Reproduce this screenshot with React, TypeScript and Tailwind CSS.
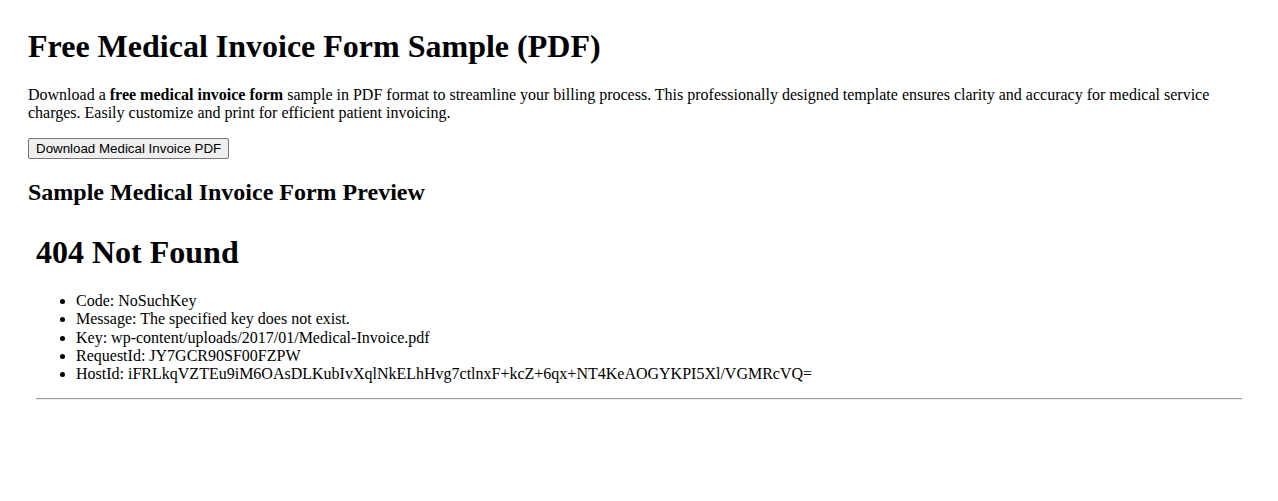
import React from 'react';

const details: { label: string; value: string }[] = [
    { label: 'Code', value: 'NoSuchKey' },
    { label: 'Message', value: 'The specified key does not exist.' },
    { label: 'Key', value: 'wp-content/uploads/2017/01/Medical-Invoice.pdf' },
    { label: 'RequestId', value: 'JY7GCR90SF00FZPW' },
    { label: 'HostId', value: 'iFRLkqVZTEu9iM6OAsDLKubIvXqlNkELhHvg7ctlnxF+kcZ+6qx+NT4KeAOGYKPI5Xl/VGMRcVQ=' },
];

const App: React.FC = () => {
    return (
        <div className="min-h-[501px] bg-white px-[28px] pt-[28px] text-black font-['Liberation_Serif','Times_New_Roman',serif]">
            <h1 className="text-[32px] font-bold leading-[37px]">Free Medical Invoice Form Sample (PDF)</h1>

            <p className="mt-[21px] text-[16px] leading-[18.4px]">
                Download a <strong className="font-bold">free medical invoice form</strong> sample in PDF format to streamline your billing process. This professionally designed template ensures clarity and accuracy for medical service charges. Easily customize and print for efficient patient invoicing.
            </p>

            <button className="mt-[15px] flex h-[21px] items-center rounded-[2px] border border-[#767676] bg-[#efefef] px-[7px] text-[13.33px] leading-none text-black font-['Liberation_Sans',Arial,sans-serif]">
                Download Medical Invoice PDF
            </button>

            <h2 className="mt-[19px] text-[24px] font-bold leading-[28px]">Sample Medical Invoice Form Preview</h2>

            {/* preview frame: the embedded pdf url answers with the S3 error page */}
            <div className="px-[8px]">
                <h1 className="mt-[28px] text-[32px] font-bold leading-[37px]">404 Not Found</h1>
                <ul className="mt-[21px] list-disc pl-[40px] text-[16px] leading-[18.4px]">
                    {details.map((d) => (
                        <li key={d.label}>{d.label}: {d.value}</li>
                    ))}
                </ul>
                <hr className="mt-[14px] h-0 border-t border-b border-t-[#9a9a9a] border-b-[#eeeeee]" />
            </div>
        </div>
    );
};

export default App;
